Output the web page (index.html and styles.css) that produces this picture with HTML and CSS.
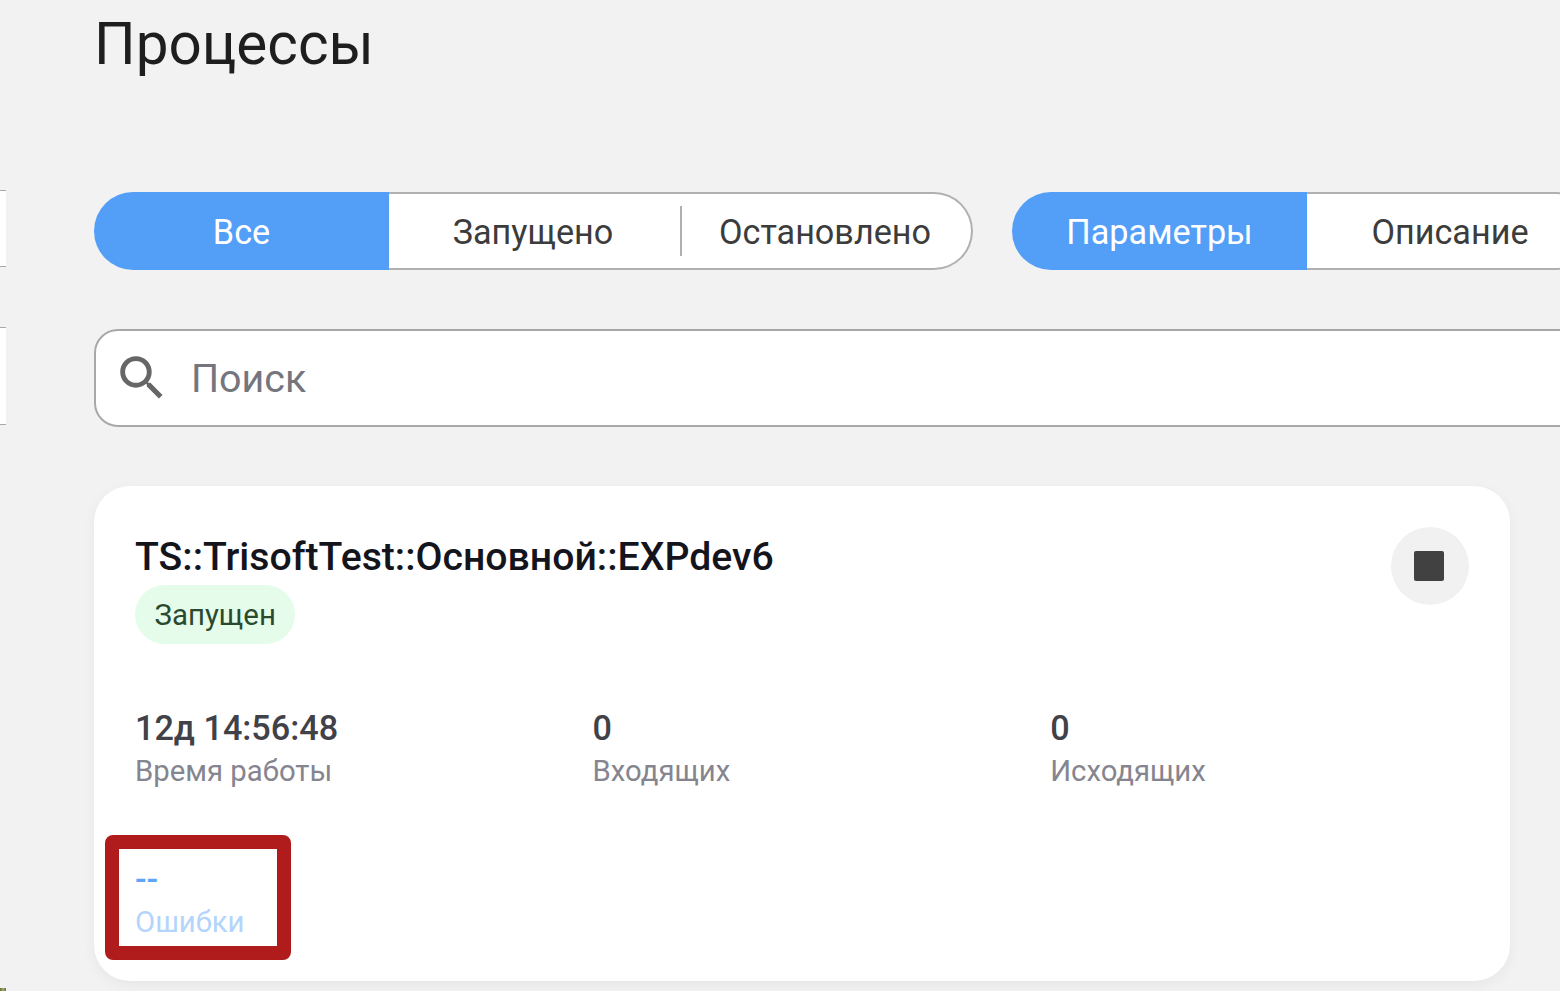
FILE: index.html
```html
<!DOCTYPE html>
<html lang="ru">
<head>
<meta charset="utf-8">
<title>Процессы</title>
<link rel="stylesheet" href="styles.css">
</head>
<body>
<div class="page">
  <aside class="stub">
    <div class="stub-item stub-first"></div>
    <div class="stub-item stub-second"></div>
    <span class="stub-edge"></span>
  </aside>
  <main class="main">
    <h1 class="title">Процессы</h1>
    <div class="toolbar">
      <div class="segmented">
        <button class="seg seg-active">Все</button>
        <div class="seg-rest">
          <button class="seg seg-first">Запущено</button>
          <span class="seg-divider"></span>
          <button class="seg seg-last">Остановлено</button>
        </div>
      </div>
      <div class="segmented segmented-open">
        <button class="seg seg-active">Параметры</button>
        <div class="seg-rest">
          <button class="seg">Описание</button>
        </div>
      </div>
    </div>
    <div class="search">
      <svg class="search-icon" viewBox="0 0 24 24" width="58" height="58" aria-hidden="true"><path fill="#666" d="M15.5 14h-.79l-.28-.27A6.47 6.47 0 0 0 16 9.5 6.5 6.5 0 1 0 9.5 16c1.61 0 3.09-.59 4.23-1.57l.27.28v.79l5 4.99L20.49 19l-4.99-5zm-6 0C7.01 14 5 11.99 5 9.5S7.01 5 9.5 5 14 7.01 14 9.5 11.99 14 9.5 14z"/></svg>
      <span class="search-text">Поиск</span>
    </div>
    <section class="card">
      <div class="card-head">
        <div>
          <h2 class="card-title">TS::TrisoftTest::Основной::EXPdev6</h2>
          <span class="badge">Запущен</span>
        </div>
        <button class="stop" aria-label="Стоп"><span class="stop-square"></span></button>
      </div>
      <div class="stats">
        <div class="stat"><div class="stat-value">12д 14:56:48</div><div class="stat-label">Время работы</div></div>
        <div class="stat"><div class="stat-value">0</div><div class="stat-label">Входящих</div></div>
        <div class="stat"><div class="stat-value">0</div><div class="stat-label">Исходящих</div></div>
        <div class="stat stat-error"><div class="stat-value">--</div><div class="stat-label">Ошибки</div><span class="highlight"></span></div>
      </div>
    </section>
  </main>
</div>
</body>
</html>
```
FILE: styles.css
```css
* { box-sizing: border-box; }
html, body { margin: 0; height: 100%; overflow: hidden; }
body { background: #f2f2f2; font-family: Roboto, "Liberation Sans", sans-serif; color: #3c3c3c; }
.page { display: flex; height: 991px; width: 1560px; overflow: hidden; }

.stub { position: relative; flex: 0 0 6px; padding-top: 190px; }
.stub-item { background: #fff; border-top: 1px solid #a8a8a8; border-bottom: 1px solid #a8a8a8; height: 77px; }
.stub-second { margin-top: 60px; height: 98px; }
.stub-edge { position: absolute; left: 0; bottom: 0; width: 6px; height: 3px; background: linear-gradient(90deg, #3f7f4a, #c9a23a 50%, #3f6fc0); }

.main { flex: none; width: 1640px; padding-left: 88px; }
.title { margin: 0; padding-top: 10px; font-size: 58.4px; line-height: 68px; font-weight: 400; color: #1e1e1e; }

.toolbar { display: flex; gap: 39px; margin-top: 114px; }
.segmented { display: flex; width: 879px; height: 78px; border-radius: 39px 0 0 39px; flex: none; }
.seg { flex: 1 1 0; background: none; border: 0; padding: 2px 0 0; font: 400 34.2px Roboto, sans-serif; color: #3c3c3c; }
.seg-active { flex: 0 0 295px; background: #539ff8; color: #fff; border-radius: 39px 0 0 39px; }
.seg-rest { flex: 1; display: flex; align-items: center; background: #fff; border: 2px solid #b0b0b0; border-left: 0; border-radius: 0 39px 39px 0; }
.seg-rest .seg { align-self: stretch; }
.seg-first { flex: 0 0 291px; padding-right: 3px; }
.seg-last { padding-right: 3px; }
.seg-divider { flex: none; width: 2px; height: 50px; background: #b0b0b0; }
.segmented-open { width: 583px; }

.search { display: flex; align-items: center; width: 1560px; height: 98px; margin-top: 59px; background: #fff; border: 2px solid #a8a8a8; border-radius: 24px; padding-left: 17px; gap: 20px; }
.search-text { font-size: 39.4px; color: #75757e; }

.card { position: relative; width: 1416px; height: 495px; margin-top: 59px; padding: 50px 41px 0; background: #fff; border-radius: 36px; box-shadow: 0 4px 14px rgba(0,0,0,.05); }
.card-head { display: flex; justify-content: space-between; }
.card-title { margin: 0; font-size: 39.2px; line-height: 42px; font-weight: 500; color: #14141c; }
.badge { display: inline-block; margin-top: 7px; padding: 0 19.5px; height: 59px; line-height: 60px; border-radius: 30px; background: #e6fcea; color: #2a4a30; font-size: 29.4px; }
.stop { display: flex; align-items: center; justify-content: center; width: 78px; height: 78px; margin: -9px 0 0; padding: 0 2px 0 0; border: 0; border-radius: 50%; background: #f1f1f1; }
.stop-square { width: 30px; height: 30px; border-radius: 2px; background: #414141; }

.stats { display: grid; grid-template-columns: repeat(3, 457.6px); row-gap: 64px; margin-top: 62px; }
.stat { position: relative; }
.stat-value { font-size: 34.2px; line-height: 44px; font-weight: 500; color: #414148; }
.stat-label { margin-top: -1px; font-size: 29.3px; line-height: 44px; color: #85858f; }
.stat-error .stat-value { color: #5fa5fb; }
.stat-error .stat-label { color: #b4d4fc; }
.highlight { position: absolute; left: -30px; top: -22px; width: 186px; height: 125px; border: 14px solid #b01c1c; border-radius: 8px; }
```
